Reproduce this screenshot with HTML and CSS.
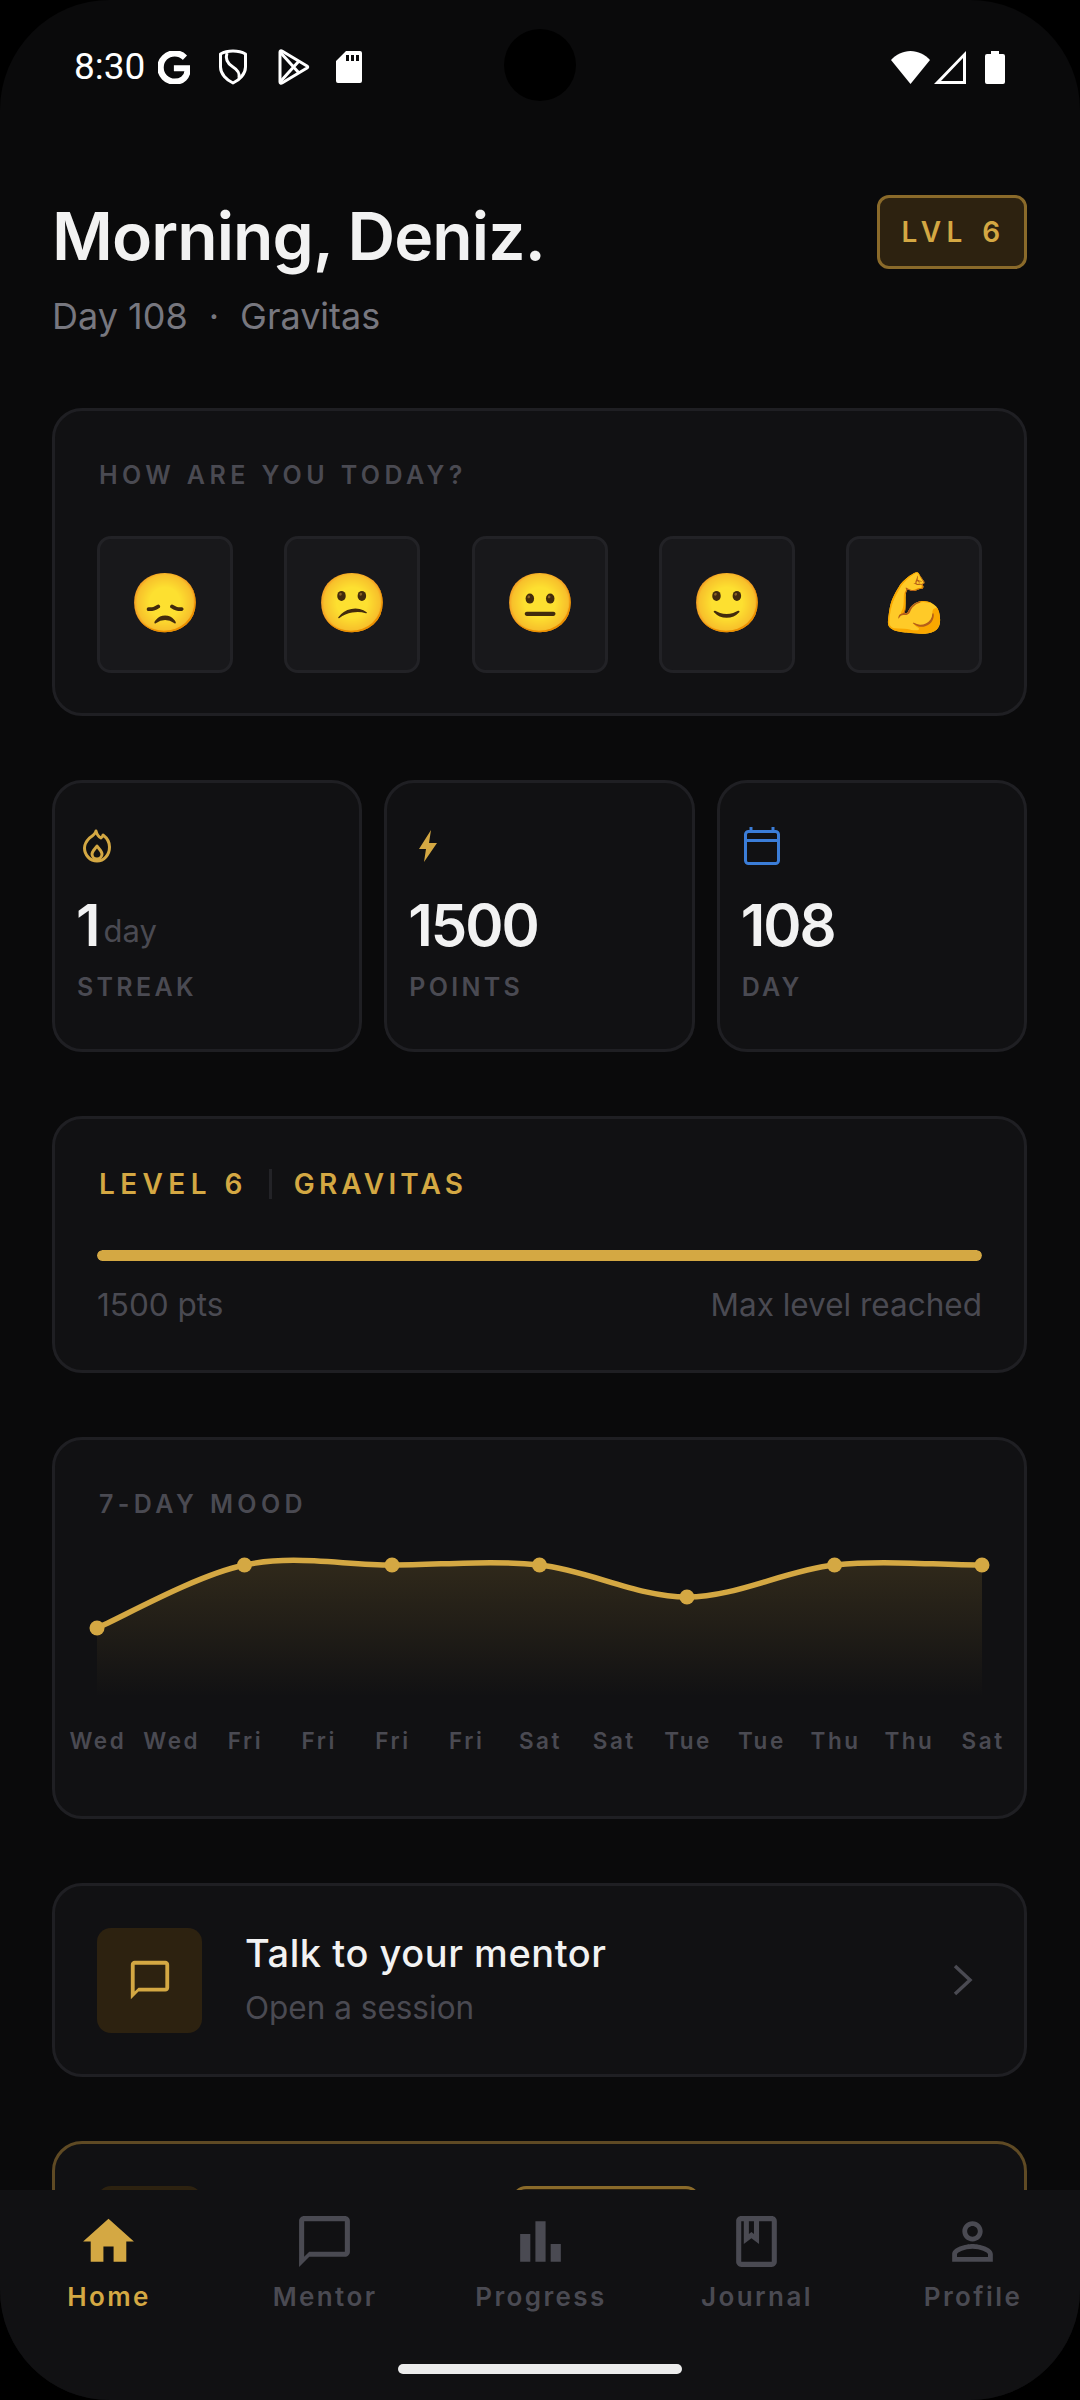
FILE: index.html
```html
<!DOCTYPE html>
<html lang="en">
<head>
<meta charset="utf-8">
<title>Home</title>
<link rel="stylesheet" href="styles.css">
</head>
<body>
<div class="frame">
  <div class="status">
    <div class="status-left">
      <span class="time">8:30</span>
      <svg class="si si-g" viewBox="2 2 19.5 20"><path d="M21.35 11.1h-9.17v2.73h6.51c-.33 3.81-3.5 5.44-6.5 5.44C8.36 19.27 5 16.25 5 12c0-4.1 3.2-7.27 7.2-7.27 3.09 0 4.9 1.97 4.9 1.97L19 4.72S16.56 2 12.1 2C6.42 2 2 6.8 2 12c0 5.05 4.13 10 10.22 10 5.35 0 9.25-3.67 9.25-9.09 0-1.15-.12-1.81-.12-1.81z"/></svg>
      <svg class="si si-line si-shield" viewBox="0 0 30 36"><path d="M15 2c4 0 9 1 12.500 3v13c0 7-6 13-12.500 16C8.500 31 2.500 25 2.500 18V5C6 3 11 2 15 2z"/><path d="M9 4C7 10 10 15 15 18c5 3 7 6 6 11"/></svg>
      <svg class="si si-line si-play" viewBox="0 0 33 36"><path d="M3 3c0-1 1-1.500 2-1l25 15c1 .6 1 1.400 0 2L5 34c-1 .5-2 0-2-1z"/><path d="M3 3l19 21M3 33l19-21"/></svg>
      <svg class="si si-sd" viewBox="0 0 26 32"><path fill-rule="evenodd" d="M10 0h14a2 2 0 0 1 2 2v28a2 2 0 0 1-2 2H2a2 2 0 0 1-2-2V10zM10 4v6h3V4zm5 0v6h3V4zm5 0v6h3V4z"/></svg>
    </div>
    <div class="camera"></div>
    <div class="status-right">
      <svg class="si si-wifi" viewBox="0 0 39 33"><path d="M19.500 33L0 9C5 3.500 12 0 19.500 0S34 3.500 39 9z"/></svg>
      <svg class="si si-signal" viewBox="0 0 32 33"><path fill-rule="evenodd" d="M32 0v33H0zM29 7L7 30h22z"/></svg>
      <svg class="si si-batt" viewBox="0 0 20 33"><path d="M6 0h8v3h4a2 2 0 0 1 2 2v26a2 2 0 0 1-2 2H2a2 2 0 0 1-2-2V5a2 2 0 0 1 2-2h4z"/></svg>
    </div>
  </div>

  <main class="content">
    <header class="head">
      <div>
        <h1 class="title">Morning, Deniz.</h1>
        <p class="sub"><span>Day 108</span><span class="dot">·</span><span>Gravitas</span></p>
      </div>
      <div class="badge">LVL 6</div>
    </header>

    <section class="card mood">
      <div class="label">HOW ARE YOU TODAY?</div>
      <div class="mood-row">
        <div class="mood-btn">😞</div>
        <div class="mood-btn">😕</div>
        <div class="mood-btn">😐</div>
        <div class="mood-btn">🙂</div>
        <div class="mood-btn">💪</div>
      </div>
    </section>

    <section class="stats">
      <div class="card stat">
        <svg class="stat-ico ico-flame" viewBox="0 -2 28 38" fill="none" stroke="#d4a843" stroke-width="3" stroke-linejoin="round"><path d="M13 2c1 4 3 6 5 7 1-1 2-2 2-3 4 3 6.500 7 6.500 12 0 8-5.500 14-12.500 14S1.500 26 1.500 19c0-4 2-7 5-10 3-2 6-4 6.500-7z"/><path d="M14 17c2 3 5 5 5 8a5 5 0 0 1-10 0c0-3 3-5 5-8z"/></svg>
        <div class="val">1<span class="unit">day</span></div>
        <div class="stat-label">STREAK</div>
      </div>
      <div class="card stat">
        <svg class="stat-ico ico-bolt" viewBox="0 -3 20 38"><path d="M13 0L1 19h7l-2 13L19 13h-8z" fill="#d4a843"/></svg>
        <div class="val">1500</div>
        <div class="stat-label">POINTS</div>
      </div>
      <div class="card stat">
        <svg class="stat-ico ico-cal" viewBox="0 0 36 38" fill="none" stroke="#3b7dd8" stroke-width="3"><rect x="1.500" y="4.500" width="33" height="32" rx="3"/><path d="M1.500 13.500h33M7 0v5M29 0v5"/></svg>
        <div class="val">108</div>
        <div class="stat-label">DAY</div>
      </div>
    </section>

    <section class="card level">
      <div class="level-head"><span class="level-num">LEVEL 6</span><i class="divider"></i><span>GRAVITAS</span></div>
      <div class="bar"><div class="bar-fill"></div></div>
      <div class="level-foot"><span>1500 pts</span><span>Max level reached</span></div>
    </section>

    <section class="card chart">
      <div class="label">7-DAY MOOD</div>
      <svg class="plot" viewBox="98 1540 884 160" preserveAspectRatio="none">
        <defs>
          <linearGradient id="fade" x1="0" y1="0" x2="0" y2="1">
            <stop offset="0" stop-color="#d4a843" stop-opacity=".16"/>
            <stop offset="1" stop-color="#d4a843" stop-opacity="0"/>
          </linearGradient>
        </defs>
        <path fill="url(#fade)" d="M98 1628C122.600 1617.500 196.200 1575.500 245.300 1565C294.400 1554.500 343.600 1565 392.700 1565C441.800 1565 490.900 1559.700 540 1565C589.100 1570.300 638.200 1597 687.300 1597C736.400 1597 785.600 1570.300 834.700 1565C883.800 1559.700 933 1565 982 1565V1697H98z"/>
        <path fill="none" stroke="#d4a843" stroke-width="5.500" d="M98 1628C122.600 1617.500 196.200 1575.500 245.300 1565C294.400 1554.500 343.600 1565 392.700 1565C441.800 1565 490.900 1559.700 540 1565C589.100 1570.300 638.200 1597 687.300 1597C736.400 1597 785.600 1570.300 834.700 1565C883.800 1559.700 933 1565 982 1565"/>
        <g fill="#d4a843">
          <circle cx="98" cy="1628" r="7.500"/><circle cx="245.300" cy="1565" r="7.500"/><circle cx="392.700" cy="1565" r="7.500"/><circle cx="540" cy="1565" r="7.500"/><circle cx="687.300" cy="1597" r="7.500"/><circle cx="834.700" cy="1565" r="7.500"/><circle cx="982" cy="1565" r="7.500"/>
        </g>
      </svg>
      <div class="days">
        <span>Wed</span><span>Wed</span><span>Fri</span><span>Fri</span><span>Fri</span><span>Fri</span><span>Sat</span><span>Sat</span><span>Tue</span><span>Tue</span><span>Thu</span><span>Thu</span><span>Sat</span>
      </div>
    </section>

    <section class="card mentor">
      <div class="tile">
        <svg class="tile-ico" viewBox="0 0 24 24"><path fill="#d4a843" d="M20 2H4c-1.100 0-2 .9-2 2v18l4-4h14c1.100 0 2-.9 2-2V4c0-1.100-.9-2-2-2zm0 14H6l-2 2V4h16v12z"/></svg>
      </div>
      <div class="mentor-text">
        <div class="mentor-title">Talk to your mentor</div>
        <div class="mentor-sub">Open a session</div>
      </div>
      <svg class="chev" viewBox="0 0 20 32" fill="none" stroke="#4a4a52" stroke-width="3.500"><path d="M2 2l15 14L2 30"/></svg>
    </section>

    <section class="card peek">
      <div class="peek-tile"></div>
      <div class="peek-pill"></div>
    </section>
  </main>

  <nav class="nav">
    <div class="tabs">
      <div class="tab active">
        <svg class="tab-ico" viewBox="0 0 24 24"><path d="M10 20v-6h4v6h5v-8h3L12 3 2 12h3v8z"/></svg>
        <span>Home</span>
      </div>
      <div class="tab">
        <svg class="tab-ico" viewBox="0 0 24 24"><path d="M20 2H4c-1.100 0-2 .9-2 2v18l4-4h14c1.100 0 2-.9 2-2V4c0-1.100-.9-2-2-2zm0 14H6l-2 2V4h16v12z"/></svg>
        <span>Mentor</span>
      </div>
      <div class="tab">
        <svg class="tab-ico" viewBox="0 0 24 24"><path d="M4 9h4v11H4zm12 4h4v7h-4zm-6-9h4v16h-4z"/></svg>
        <span>Progress</span>
      </div>
      <div class="tab">
        <svg class="tab-ico" viewBox="0 0 24 24"><path d="M18 2H6c-1.100 0-2 .9-2 2v16c0 1.100.9 2 2 2h12c1.100 0 2-.9 2-2V4c0-1.100-.9-2-2-2zM9 4h2v5l-1-.75L9 9V4zm9 16H6V4h1v9l3-2.250L13 13V4h5v16z"/></svg>
        <span>Journal</span>
      </div>
      <div class="tab">
        <svg class="tab-ico" viewBox="0 0 24 24"><path d="M12 5.900c1.160 0 2.100.94 2.100 2.100s-.94 2.100-2.100 2.100S9.900 9.160 9.900 8s.94-2.100 2.100-2.100m0 9c2.970 0 6.100 1.460 6.100 2.100v1.100H5.900V17c0-.64 3.130-2.100 6.100-2.100M12 4C9.790 4 8 5.790 8 8s1.790 4 4 4 4-1.790 4-4-1.790-4-4-4zm0 9c-2.670 0-8 1.340-8 4v3h16v-3c0-2.660-5.330-4-8-4z"/></svg>
        <span>Profile</span>
      </div>
    </div>
    <div class="home-bar"></div>
  </nav>
</div>
</body>
</html>
```
FILE: styles.css
```css
* { box-sizing: border-box; }
html, body { margin: 0; padding: 0; background: #000; }
body { width: 1080px; height: 2400px; overflow: hidden; font-family: Inter, "Noto Sans", sans-serif; }

.frame {
  position: relative;
  width: 1080px;
  height: 2400px;
  background: #0a0a0b;
  border-radius: 110px;
  overflow: hidden;
  display: flex;
  flex-direction: column;
}

/* status bar */
.status {
  flex: none;
  height: 120px;
  padding: 49px 75px 0 74px;
  display: flex;
  justify-content: space-between;
  align-items: flex-start;
}
.status-left, .status-right { display: flex; align-items: center; height: 36px; }
.time { font: 400 37px/36px Roboto, sans-serif; color: #fff; width: 84px; }
.si { display: block; fill: #fff; }
.si-line { fill: none; stroke: #fff; stroke-width: 3; stroke-linejoin: round; }
.si-g { width: 32px; height: 33px; stroke: #fff; stroke-width: 1; }
.si-shield { width: 30px; height: 36px; margin-left: 28px; }
.si-play { width: 33px; height: 36px; margin-left: 29px; }
.si-sd { width: 26px; height: 32px; margin-left: 26px; }
.si-wifi { width: 39px; height: 33px; }
.si-signal { width: 32px; height: 33px; margin-left: 4px; }
.si-batt { width: 20px; height: 33px; margin-left: 19px; }
.camera {
  position: absolute;
  left: 504px;
  top: 29px;
  width: 72px;
  height: 72px;
  border-radius: 50%;
  background: #000;
}

/* content */
.content {
  flex: 1;
  min-height: 0;
  overflow: hidden;
  padding: 75px 53px 0 52px;
  display: flex;
  flex-direction: column;
  gap: 64px;
}
.head { display: flex; justify-content: space-between; align-items: flex-start; height: 149px; flex: none; }
.title { margin: 0; font-size: 66px; line-height: 82px; font-weight: 600; color: #f2f2f2; letter-spacing: -.9px; }
.sub { margin: 14px 0 0; font-size: 36px; line-height: 50px; font-weight: 400; color: #77777f; display: flex; }
.dot { margin: 0 21px; }
.badge {
  width: 150px;
  height: 74px;
  border: 3px solid #8a6a2a;
  border-radius: 12px;
  background: #2d2210;
  color: #d4a843;
  font-size: 28px;
  font-weight: 600;
  letter-spacing: 5.400px;
  word-spacing: 2px;
  padding-left: 3px;
  display: flex;
  align-items: center;
  justify-content: center;
}

.card {
  flex: none;
  background: #111113;
  border: 3px solid #1f1f23;
  border-radius: 30px;
}
.label { font-size: 25px; line-height: 30px; font-weight: 600; letter-spacing: 4.400px; word-spacing: 1px; color: #4a4a52; }

.mood { height: 308px; padding: 49px 42px 0; }
.mood .label { padding-left: 2px; }
.mood-row { display: flex; justify-content: space-between; margin-top: 46px; }
.mood-btn {
  width: 136px;
  height: 137px;
  background: #18181b;
  border: 3px solid #222226;
  border-radius: 14px;
  padding-bottom: 5px;
  display: flex;
  align-items: center;
  justify-content: center;
  font-size: 58px;
  line-height: 1;
}

.stats { flex: none; display: grid; grid-template-columns: repeat(3, 1fr); gap: 22px; }
.stat { height: 272px; padding: 44px 20px 0 22px; }
.stat-ico { display: block; height: 38px; width: auto; }
.ico-flame { margin-left: 6px; }
.ico-bolt { margin-left: 9px; }
.ico-cal { margin-left: 2px; }
.val { height: 72px; margin-top: 24px; margin-left: -1px; font-size: 58px; line-height: 72px; font-weight: 600; letter-spacing: -2px; color: #f2f2f2; display: flex; align-items: flex-end; }
.unit { margin-left: 5px; font-size: 31px; line-height: 60px; font-weight: 400; letter-spacing: 0; color: #4a4a52; }
.stat-label { margin-top: 11px; font-size: 25px; line-height: 30px; font-weight: 600; letter-spacing: 3.300px; color: #4a4a52; }

.level { height: 257px; padding: 47px 42px 0; }
.level-head { display: flex; align-items: center; height: 36px; font-size: 28px; font-weight: 600; letter-spacing: 4.200px; color: #d4a843; padding-left: 2px; }
.level-num { letter-spacing: 5.400px; }
.divider { width: 3px; height: 30px; background: #232327; margin: 0 22px 0 21px; }
.bar { height: 11px; margin-top: 48px; border-radius: 6px; background: #232327; overflow: hidden; }
.bar-fill { height: 100%; width: 100%; background: #d4a843; border-radius: 6px; }
.level-foot { display: flex; justify-content: space-between; margin-top: 23px; font-size: 31.500px; line-height: 42px; color: #4a4a52; }

.chart { height: 382px; padding: 49px 42px 0; }
.chart .label { padding-left: 2px; }
.plot { display: block; width: 100%; height: 160px; margin-top: 21px; overflow: visible; }
.days {
  display: grid;
  grid-template-columns: repeat(13, 1fr);
  margin: 25px -37px 0;
  font-size: 22.500px;
  line-height: 32px;
  font-weight: 600;
  letter-spacing: 2.500px;
  color: #4a4a52;
  text-align: center;
}
.days span { padding-left: 2px; }

.mentor { height: 194px; padding: 0 51px 0 42px; display: flex; align-items: center; }
.tile { width: 105px; height: 105px; flex: none; border-radius: 14px; background: #2d2210; display: flex; align-items: center; justify-content: center; }
.tile-ico { width: 46px; height: 46px; display: block; }
.mentor-text { flex: 1; margin-left: 43px; padding-bottom: 5px; }
.mentor-title { font-size: 38px; line-height: 50px; font-weight: 500; letter-spacing: .55px; color: #f2f2f2; }
.mentor-sub { margin-top: 10px; font-size: 31.500px; line-height: 40px; color: #4a4a52; }
.chev { width: 20px; height: 32px; display: block; }

.peek { height: 240px; border-color: #5f4a24; padding: 42px 42px 0; display: flex; }
.peek-tile { width: 105px; height: 105px; flex: none; border-radius: 14px; background: #2d2210; }
.peek-pill { width: 188px; height: 60px; margin-left: 310px; border: 3px solid #8a6a2a; border-radius: 14px; background: #2d2210; }

/* bottom nav */
.nav { flex: none; height: 210px; background: #111113; position: relative; z-index: 1; }
.tabs { display: flex; padding-top: 21px; }
.tab { flex: 1; display: flex; flex-direction: column; align-items: center; color: #4a4a52; fill: #4a4a52; }
.tab span { font-size: 26px; line-height: 34px; font-weight: 600; letter-spacing: 2.400px; margin-top: 8px; padding-left: 2px; }
.tab-ico { width: 61px; height: 61px; display: block; }
.tab.active { color: #d4a843; fill: #d4a843; }
.home-bar { position: absolute; left: 398px; top: 174px; width: 284px; height: 10px; border-radius: 5px; background: #ececec; }
```
